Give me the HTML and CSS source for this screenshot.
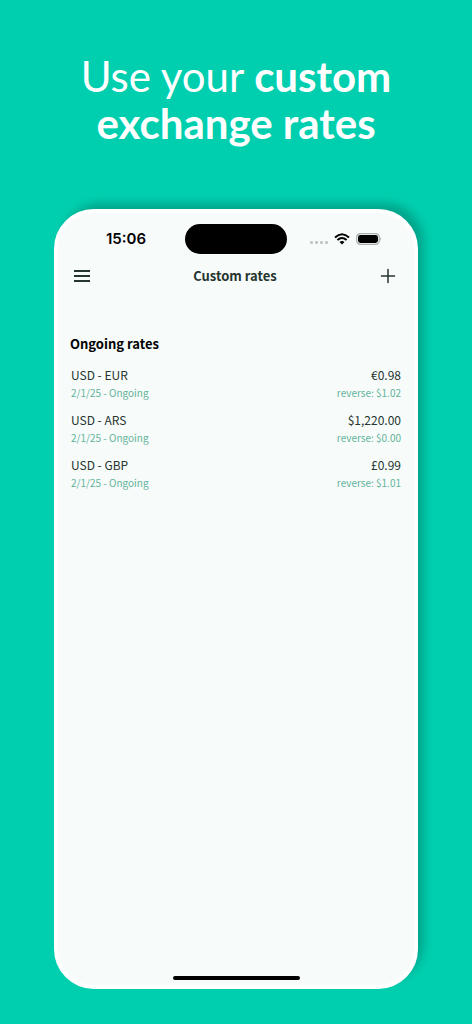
FILE: index.html
```html
<!DOCTYPE html>
<html lang="en">
<head>
<meta charset="utf-8">
<meta name="viewport" content="width=device-width, initial-scale=1">
<title>Custom rates</title>
<link rel="stylesheet" href="styles.css">
</head>
<body>
<h1 class="headline">Use your <strong>custom exchange rates</strong></h1>
<main class="phone">
  <div class="status">
    <time class="clock">15:06</time>
    <div class="island"></div>
    <div class="indicators">
      <svg width="18" height="4" viewBox="0 0 18 4" fill="#c3c7c6"><rect width="3" height="3" y="1" rx="1"/><rect x="5" width="3" height="3" y="1" rx="1"/><rect x="10" width="3" height="3" y="1" rx="1"/><rect x="15" width="3" height="3" y="1" rx="1"/></svg>
      <svg width="16" height="12" viewBox="0 0 16 12" fill="none" stroke="#000" stroke-width="2"><path d="M1 4.4Q8-2 15 4.4M3.4 7.1Q8 3 12.6 7.1"/><path d="M5.5 9Q8 7 10.5 9L8 11.5Z" fill="#000" stroke="none"/></svg>
      <svg width="26" height="12" viewBox="0 0 26 12"><rect x=".7" y=".7" width="22.6" height="10.6" rx="3.6" fill="none" stroke="#a9adab" stroke-width="1.2"/><rect x="2" y="2" width="20" height="8" rx="2.4"/><path d="M24.3 4Q26 6 24.3 8Z" fill="#a0a4a2"/></svg>
    </div>
  </div>
  <header class="bar">
    <button class="icon-button" aria-label="Menu"><svg width="16" height="14" viewBox="0 0 16 14" stroke="#25352f" stroke-width="1.8"><path d="M0 2H16M0 7H16M0 12H16"/></svg></button>
    <h2 class="title">Custom rates</h2>
    <button class="icon-button" aria-label="Add rate"><svg width="16" height="16" viewBox="0 0 16 16" stroke="#25352f" stroke-width="1.5" stroke-linecap="round"><path d="M1.5 8H14.5M8 1.5V14.5"/></svg></button>
  </header>
  <section class="rates">
    <h3 class="section-title">Ongoing rates</h3>
    <ul class="list">
      <li class="rate"><div class="line"><span>USD - EUR</span><span>€0.98</span></div><div class="line detail"><span>2/1/25 - Ongoing</span><span>reverse: $1.02</span></div></li>
      <li class="rate"><div class="line"><span>USD - ARS</span><span>$1,220.00</span></div><div class="line detail"><span>2/1/25 - Ongoing</span><span>reverse: $0.00</span></div></li>
      <li class="rate"><div class="line"><span>USD - GBP</span><span>£0.99</span></div><div class="line detail"><span>2/1/25 - Ongoing</span><span>reverse: $1.01</span></div></li>
    </ul>
  </section>
  <div class="home"></div>
</main>
</body>
</html>
```
FILE: styles.css
```css
* { box-sizing: border-box; margin: 0; padding: 0; }
body {
  min-height: 100vh;
  display: flex;
  flex-direction: column;
  gap: 62px;
  padding: 53px 54px 35px;
  background: #00cfaf;
  font-family: "Noto Sans CJK SC", "Noto Sans", sans-serif;
  color: #25352f;
}
.headline {
  font: 400 42px/47px Lato, sans-serif;
  color: #fff;
  text-align: center;
}
.headline strong { font-weight: 700; }
.phone {
  flex: 1;
  display: flex;
  flex-direction: column;
  padding: 11px 12px 5px;
  border: 4px solid #fff;
  border-radius: 40px;
  background: #f7fbfa;
  box-shadow: 7px -7px 10px -1px #00a58b;
}
.status {
  display: grid;
  grid-template-columns: 1fr 102px 1fr;
  align-items: center;
}
.clock {
  padding-left: 36px;
  font: 600 15px/20px Inter, sans-serif;
  color: #000;
}
.island { height: 30px; border-radius: 15px; background: #000; }
.indicators {
  display: flex;
  align-items: center;
  justify-content: flex-end;
  gap: 6px;
  padding-right: 20px;
}
.indicators svg:first-child { margin-top: 6px; }
.bar {
  display: flex;
  align-items: center;
  justify-content: space-between;
  height: 44px;
}
.icon-button {
  display: grid;
  place-items: center;
  width: 24px;
  height: 24px;
  border: 0;
  background: none;
}
.bar .icon-button:last-child { margin-right: 2px; }
.title { font-size: 13px; line-height: 20px; font-weight: 700; }
.rates { flex: 1; padding-top: 36px; }
.section-title { font-size: 13px; line-height: 20px; font-weight: 700; color: #000; }
.list { list-style: none; padding: 12px 1px 0; }
.rate { padding-bottom: 9px; }
.line { display: flex; justify-content: space-between; font-size: 12px; line-height: 18px; }
.detail { font-size: 10px; color: #63b49b; }
.home { align-self: center; width: 127px; height: 4px; border-radius: 2px; background: #000; }
```
